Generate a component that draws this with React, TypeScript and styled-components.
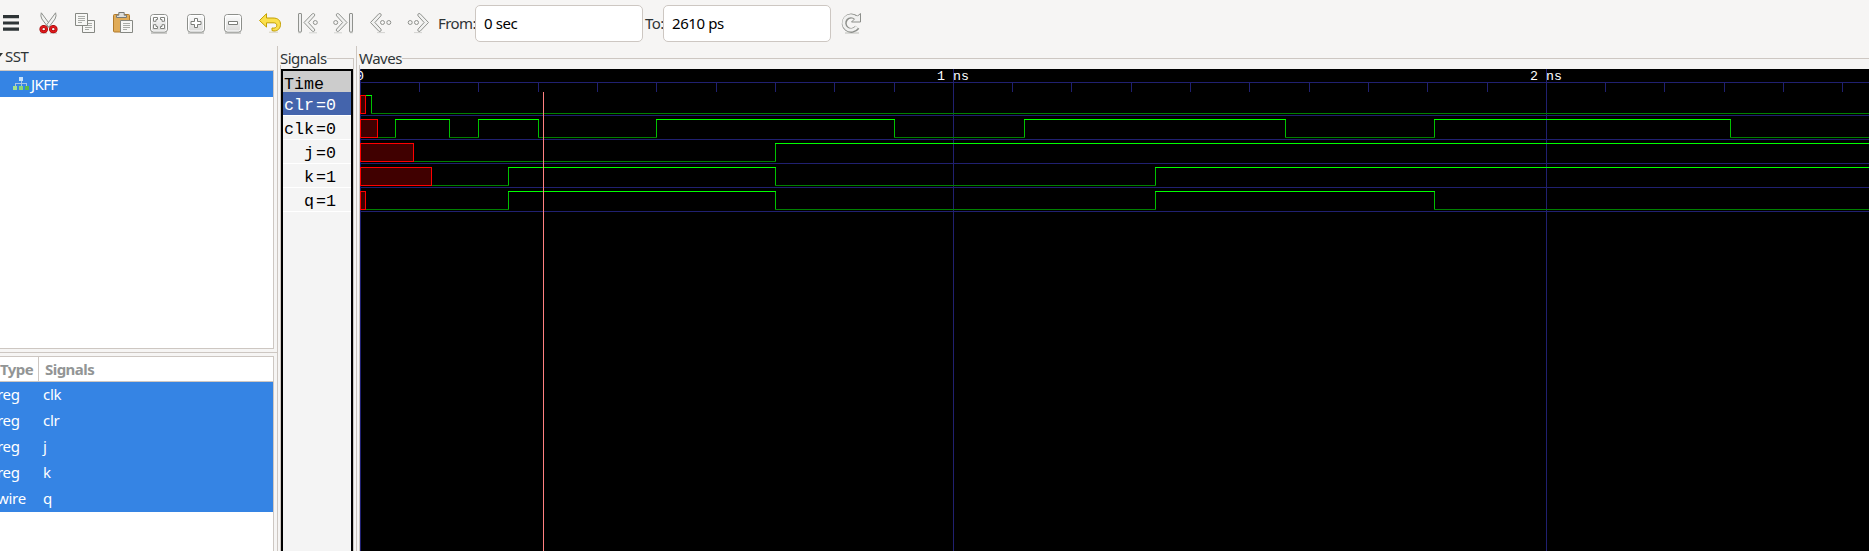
import React from "react";
import styled, { createGlobalStyle } from "styled-components";

const line = "#cdc7c2";
const sans = `"Noto Sans", "Open Sans", sans-serif`;
const mono = `"Liberation Mono", monospace`;

const Global = createGlobalStyle`
  * { box-sizing: border-box; }
  body { margin: 0; background: #f6f5f4; overflow: hidden; font: 15px ${sans}; color: #2e3436; }
`;

const Window = styled.div`display: flex; flex-direction: column; width: 1869px; height: 551px; overflow: hidden;`;

const Toolbar = styled.header`height: 46px; flex: none; display: flex; margin-left: -8px;`;
const ToolButton = styled.button`
  width: 37px; height: 46px; padding: 0; border: 0; background: none; flex: none;
  svg { display: block; }
`;
const FieldLabel = styled.label<{ $w: number }>`
  width: ${p => p.$w}px; flex: none; margin-left: 2px; line-height: 47px; letter-spacing: -0.55px; white-space: nowrap;
`;
const Field = styled.input`
  width: 168px; height: 37px; margin-top: 5px; border: 1px solid ${line}; border-radius: 5px; background: #fff;
  padding: 0 8px 2px; font: 15px ${sans}; letter-spacing: -0.4px; color: #000;
`;

const Main = styled.main`flex: 1; min-height: 0; display: flex;`;
const Sidebar = styled.aside`width: 278px; flex: none; border-right: 1px solid ${line}; display: flex; flex-direction: column;`;
const TreeTitle = styled.div`
  height: 24px; flex: none; display: flex; line-height: 20px; letter-spacing: -0.5px;
  svg { flex: none; margin: 7px 2px 0 0; }
`;
const Tree = styled.div`height: 279px; width: 274px; flex: none; background: #fff; border: solid ${line}; border-width: 1px 1px 1px 0;`;
const TreeRow = styled.div`
  height: 26px; padding-left: 13px; display: flex; gap: 2px; background: #3584e4; color: #fff; line-height: 26px; letter-spacing: -0.6px;
  svg { flex: none; margin-top: 6px; }
`;
const Splitter = styled.div`height: 7px; flex: none; padding-top: 3px; &::before { content: ""; display: block; border-top: 1px solid ${line}; }`;
const Table = styled.div`flex: 1; width: 274px; background: #fff; border: solid ${line}; border-width: 1px 1px 0 0;`;
const HeadRow = styled.div`
  height: 25px; display: flex; border-bottom: 1px solid ${line}; color: #929595; font-weight: 700; line-height: 24px; letter-spacing: -0.55px;
`;
const DataRow = styled.div`height: 26px; display: flex; background: #3584e4; color: #fff; line-height: 25px; letter-spacing: -0.3px;`;
const HeadType = styled.span`width: 39px; flex: none; border-right: 1px solid ${line};`;
const HeadName = styled.span`padding-left: 6px;`;
const TypeCell = styled.span`width: 43px; flex: none; margin-left: -3px;`;
const NameCell = styled.span`margin-left: 3px;`;

const PaneLine = styled.div`width: 1px; flex: none; margin: 0 2px; background: ${line};`;
const Frame = styled.section<{ $w?: number }>`
  ${p => (p.$w ? `width: ${p.$w}px; flex: none; margin-left: 2px;` : "flex: 1; min-width: 0;")}
  display: flex; flex-direction: column;
`;
const Legend = styled.div<{ $closed?: boolean }>`
  height: 23px; flex: none; display: flex; line-height: 24px; letter-spacing: -0.5px;
  background: linear-gradient(${line}, ${line}) 0 19px / 1px 4px no-repeat;
  &::after {
    content: ""; flex: 1; margin-top: 12px; border: solid ${line}; border-width: 1px ${p => (p.$closed ? 1 : 0)}px 0 0;
  }
`;
const FrameBody = styled.div<{ $closed?: boolean }>`
  flex: 1; min-height: 0; display: flex; border: solid ${line}; border-width: 0 ${p => (p.$closed ? 1 : 0)}px 0 1px;
`;
const SignalList = styled.div`
  flex: 1; border: solid #000; border-width: 2px 2px 0 2px; background: #f4f4f4; font: 16.67px ${mono}; color: #000;
`;
const TimeRow = styled.div`height: 21px; padding-left: 1px; background: #ccc; line-height: 28px; overflow: hidden;`;
const SignalRow = styled.div<{ $selected?: boolean }>`
  height: 24px; padding-left: 1px; line-height: 27px; white-space: pre; border-bottom: 1px solid #fff;
  ${p => p.$selected && "background: #4464ac; color: #fff;"}
`;
const SignalValue = styled.span`margin-left: 2px;`;
const Waves = styled.svg`display: block; flex: none; background: #000;`;

/* ---------- toolbar icons, each drawn on the whole 37x46 button ---------- */

const Icon = ({ children }: { children: React.ReactNode }) => (
  <ToolButton>
    <svg width="37" height="46" viewBox="0 0 37 46" fill="none" strokeLinejoin="round">{children}</svg>
  </ToolButton>
);

const Page = ({ x, y }: { x: number; y: number }) => (
  <g>
    <path d={`M${x + 0.5} ${y + 0.5}h12v12h-12z`} fill="#f7f7f5" stroke="#868883" />
    <path d={`M${x + 3} ${y + 3.5}h7M${x + 3} ${y + 5.5}h7M${x + 3} ${y + 7.5}h7M${x + 3} ${y + 9.5}h4`} stroke="#a9aba7" />
  </g>
);

const Key = ({ children }: { children: React.ReactNode }) => (
  <Icon>
    <path d="M11 33h16" stroke="#b9b9b7" strokeWidth="1.4" />
    <rect x="10.5" y="14.5" width="17" height="17.5" rx="3" fill="url(#key)" stroke="#8d8f8b" />
    <rect x="11.5" y="15.5" width="15" height="15.5" rx="2" stroke="#fff" />
    {children}
  </Icon>
);

const Chevron = ({ children, flip }: { children: React.ReactNode; flip?: boolean }) => (
  <Icon>
    <g transform={flip ? "translate(38 0) scale(-1 1)" : undefined}>{children}</g>
  </Icon>
);

const ChevronShape = ({ x }: { x: number }) => (
  <path
    d={`M${x} 22.5l8.3-8.7q1.2-.7 2 .1q.8 1 .1 2l-6 6.6l6 6.6q.7 1-.1 2q-.8.8-2 .1z`}
    fill="#f1f1f0" stroke="#90928e"
  />
);

const toEdge = (
  <>
    <path d="M10 32.8h3M21 32.8h8" stroke="#d3d3d1" />
    <rect x="10.5" y="13.5" width="3" height="18.5" rx=".5" fill="#eee" stroke="#90928e" />
    <ChevronShape x={16} />
    <circle cx="27.3" cy="22.5" r="2" fill="#f6f5f4" stroke="#90928e" />
  </>
);
const step = (
  <>
    <path d="M15 32.6h8" stroke="#d3d3d1" />
    <ChevronShape x={8.5} />
    <circle cx="20.5" cy="22.5" r="2" fill="#f6f5f4" stroke="#90928e" />
    <circle cx="26.8" cy="22.5" r="2" fill="#f6f5f4" stroke="#90928e" />
  </>
);

const ToolbarIcons = () => (
  <>
    <Icon>
      <defs>
        <linearGradient id="key" x1="0" y1="0" x2="0" y2="1">
          <stop offset="0" stopColor="#fdfdfd" />
          <stop offset="1" stopColor="#d9d9d8" />
        </linearGradient>
      </defs>
      <path d="M11 16.7h16M11 23h16M11 29.2h16" stroke="#2e3436" strokeWidth="3.2" />
    </Icon>
    <Icon>
      <path d="M12.3 12.8q-1.2 3 .6 6.2l6.2 8.3l2-2.6z" fill="#f2f3f1" stroke="#8f918d" />
      <path d="M26.6 12.8q1.2 3-.6 6.2l-6.2 8.3l-2-2.6z" fill="#f2f3f1" stroke="#8f918d" />
      <path d="M11 33.2h7M21 33.2h7" stroke="#c8c2c0" />
      <ellipse cx="14.7" cy="29.2" rx="2.8" ry="2.6" stroke="#a00000" strokeWidth="3" />
      <ellipse cx="14.7" cy="29.2" rx="2.8" ry="2.6" stroke="#df1a1d" strokeWidth="1.6" />
      <ellipse cx="24.3" cy="29.2" rx="2.8" ry="2.6" stroke="#a00000" strokeWidth="3" />
      <ellipse cx="24.3" cy="29.2" rx="2.8" ry="2.6" stroke="#df1a1d" strokeWidth="1.6" />
    </Icon>
    <Icon>
      <Page x={16} y={20} />
      <Page x={9} y={13} />
    </Icon>
    <Icon>
      <rect x="10.5" y="14.5" width="16" height="17.5" rx="1" fill="#e0ab57" stroke="#b0792a" />
      <path d="M13.5 17.5v-2.3h2.3v-2.7h5.4v2.7h2.3v2.3z" fill="#dededb" stroke="#777974" />
      <rect x="17.5" y="20.5" width="12" height="12" fill="#f7f7f5" stroke="#868883" />
      <path d="M20 23.5h7M20 25.5h7M20 27.5h7M20 29.5h4" stroke="#a9aba7" />
    </Icon>
    <Key>
      <path
        d="M13.5 17.5h4v2h-1.5v1.8h-2.5zM24.5 17.5h-4v2h1.5v1.8h2.5zM13.5 28.5h4v-2h-1.5v-1.8h-2.5zM24.5 28.5h-4v-2h1.5v-1.8h2.5z"
        fill="#fff" stroke="#81837f"
      />
    </Key>
    <Key>
      <path d="M17.5 18.5h3v3h3.5v3h-3.5v3h-3v-3h-3.5v-3h3.5z" fill="#fff" stroke="#7b7d79" />
    </Key>
    <Key>
      <rect x="14.5" y="21.5" width="9" height="3" fill="#fff" stroke="#7b7d79" />
    </Key>
    <Icon>
      <path d="M18 32.2h9" stroke="#d6d0bd" />
      <path
        d="M8.5 20.5l7-6.8v4.3h6.5c5 0 7.5 2.5 7.5 6.3c0 4-2.5 6.7-6.5 6.7l-2-.4v-2.6c3 .6 4.8-.6 4.8-2.8c0-1.7-1.3-2.4-3.8-2.4h-6.5v4.3z"
        fill="#fbe04c" stroke="#c4a000"
      />
    </Icon>
    <Chevron>{toEdge}</Chevron>
    <Chevron flip>{toEdge}</Chevron>
    <Chevron>{step}</Chevron>
    <Chevron flip>{step}</Chevron>
  </>
);

const RefreshIcon = () => (
  <Icon>
    <path d="M14 33h14" stroke="#cfcfcd" strokeWidth="1.5" />
    <path d="M26.3 27.3a7.2 7.2 0 1 1-1-9.4" stroke="#8d8f8b" strokeWidth="5" />
    <path d="M29.5 13.5v8.5h-9l3-3l2.5-2.5z" fill="#f1f1f0" stroke="#8d8f8b" />
    <path d="M25.9 26.9a7.2 7.2 0 1 1-.8-9" stroke="#f1f1f0" strokeWidth="3" />
    <path d="M24 18.5l3-1.5" stroke="#f1f1f0" strokeWidth="3" />
  </Icon>
);

/* ---------- wave traces ---------- */

const ORIGIN = 360;
const END = 1869;
const FIRST_TOP = 26;
const PITCH = 24;
const SWING = 18;

type Signal = { name: string; value: number; unknownUntil: number; start: 0 | 1; edges: number[] };

const signals: Signal[] = [
  { name: "clr", value: 0, unknownUntil: 365, start: 1, edges: [371] },
  { name: "clk", value: 0, unknownUntil: 377, start: 0, edges: [395, 449, 478, 538, 656, 894, 1024, 1285, 1434, 1730] },
  { name: "j", value: 0, unknownUntil: 413, start: 0, edges: [775] },
  { name: "k", value: 1, unknownUntil: 431, start: 0, edges: [508, 775, 1155] },
  { name: "q", value: 1, unknownUntil: 365, start: 0, edges: [508, 775, 1155, 1434] },
];

const sidebarRows = [
  ["reg", "clk"],
  ["reg", "clr"],
  ["reg", "j"],
  ["reg", "k"],
  ["wire", "q"],
];

const Trace = ({ signal, row }: { signal: Signal; row: number }) => {
  const top = FIRST_TOP + row * PITCH + 0.5;
  const bottom = top + SWING;
  const stops = [signal.unknownUntil, ...signal.edges, END];
  let low = "";
  let high = "";
  stops.slice(0, -1).forEach((from, i) => {
    const isHigh = (i + signal.start) % 2 === 1;
    const seg = `M${from - ORIGIN} ${isHigh ? top : bottom}H${stops[i + 1] - ORIGIN + 1}`;
    if (isHigh) high += seg;
    else low += seg;
  });
  const edges = signal.edges.map(x => `M${x - ORIGIN + 0.5} ${top - 0.5}V${bottom + 0.5}`).join("");
  return (
    <g>
      <path d={`M0 ${bottom + 2}H${END - ORIGIN}`} stroke="#202070" />
      <path d={edges} stroke="#00c000" />
      <path d={low} stroke="#008000" />
      <path d={high} stroke="#00ff00" />
      <rect x=".5" y={top} width={signal.unknownUntil - ORIGIN} height={SWING} fill="#400000" stroke="#ff0000" />
    </g>
  );
};

const WaveView = () => {
  const ticks = Array.from({ length: 25 }, (_, n) => Math.round(359.801 + 59.3 * (n + 1)) - ORIGIN + 0.5);
  const grid = [0.5, ticks[9], ticks[19]];
  return (
    <Waves width={END - ORIGIN} height="482" shapeRendering="crispEdges">
      <path d={`M0 13.5H${END - ORIGIN}`} stroke="#202070" />
      <path d={ticks.map(x => `M${x} 14V22.5`).join("")} stroke="#202070" />
      <path d={grid.map(x => `M${x} 0V482`).join("")} stroke="#202070" />
      <g fill="#fff" fontFamily="Liberation Mono, monospace" fontSize="13.3">
        <text x="-4" y="11">0</text>
        <text x="577" y="11">1 ns</text>
        <text x="1170" y="11">2 ns</text>
      </g>
      {signals.map((s, i) => <Trace key={s.name} signal={s} row={i} />)}
      <path d="M183.5 23V482" stroke="#ff8080" />
    </Waves>
  );
};

export default function App() {
  return (
    <>
      <Global />
      <Window>
        <Toolbar>
          <ToolbarIcons />
          <FieldLabel $w={37}>From:</FieldLabel>
          <Field defaultValue="0 sec" />
          <FieldLabel $w={18}>To:</FieldLabel>
          <Field defaultValue="2610 ps" />
          <RefreshIcon />
        </Toolbar>
        <Main>
          <Sidebar>
            <TreeTitle>
              <svg width="3" height="6" viewBox="0 0 3 6"><path d="M-6 0H3L-1.5 5.5z" fill="#2e3436" /></svg>
              SST
            </TreeTitle>
            <Tree>
              <TreeRow>
                <svg width="16" height="13" viewBox="0 0 16 13" shapeRendering="crispEdges">
                  <path d="M8 4v5M2.5 9V6.5h11V9" fill="none" stroke="#a9c4e4" />
                  <path d="M6 0h4v4H6z" fill="#c7e2fb" />
                  <path d="M0 9h4v4H0z" fill="#a5e08e" />
                  <path d="M6 9h4v4H6z" fill="#8bd673" />
                  <path d="M12 9h4v4h-4z" fill="#5cb848" />
                </svg>
                JKFF
              </TreeRow>
            </Tree>
            <Splitter />
            <Table>
              <HeadRow><HeadType>Type</HeadType><HeadName>Signals</HeadName></HeadRow>
              {sidebarRows.map(([kind, name]) => (
                <DataRow key={name}><TypeCell>{kind}</TypeCell><NameCell>{name}</NameCell></DataRow>
              ))}
            </Table>
          </Sidebar>
          <Frame $w={74}>
            <Legend $closed>Signals</Legend>
            <FrameBody $closed>
              <SignalList>
                <TimeRow>Time</TimeRow>
                {signals.map((s, i) => (
                  <SignalRow key={s.name} $selected={i === 0}>
                    {s.name.padStart(3)}<SignalValue>={s.value}</SignalValue>
                  </SignalRow>
                ))}
              </SignalList>
            </FrameBody>
          </Frame>
          <PaneLine />
          <Frame>
            <Legend>Waves</Legend>
            <FrameBody><WaveView /></FrameBody>
          </Frame>
        </Main>
      </Window>
    </>
  );
}
